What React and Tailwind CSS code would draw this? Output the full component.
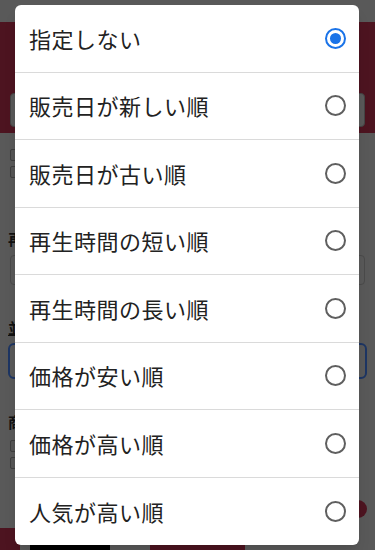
import { useState } from "react";

const options = [
  "指定しない",
  "販売日が新しい順",
  "販売日が古い順",
  "再生時間の短い順",
  "再生時間の長い順",
  "価格が安い順",
  "価格が高い順",
  "人気が高い順",
];

// page behind the modal, colours already dimmed by the backdrop
function Checkbox() {
  return <div className="w-[12px] h-[12px] border border-[#3e3e3e] bg-[#555] rounded-[2px]" />;
}

export default function App() {
  const [selected, setSelected] = useState(0);

  return (
    <div
      className="relative w-[375px] h-[550px] overflow-hidden bg-[#595959]"
      style={{ fontFamily: '"Noto Sans CJK JP", "Noto Sans", sans-serif' }}
    >
      <div className="flex flex-col h-full">
        <div className="h-[22px] flex items-center gap-6 px-5 text-[13px] text-[#1a1a1a]">
          <span>★</span>
          <span>だれでもあきたぼ…</span>
          <span className="ml-auto">|</span>
          <span>☆</span>
          <span>•</span>
        </div>
        <div className="h-[111px] bg-[#4d1420] flex items-end px-[10px] pb-[6px]">
          <div className="w-full h-[34px] bg-[#595959] rounded-[4px] border border-[#444]" />
        </div>
        <div className="flex flex-col px-[10px] pt-[16px] gap-[5px]">
          <Checkbox />
          <Checkbox />
        </div>
        <div className="px-[8px] pt-[50px] text-[15px] font-bold text-[#111]">再生時間</div>
        <div className="mx-[10px] mt-[4px] h-[30px] border border-[#4a4a4a] rounded-[4px]" />
        <div className="px-[8px] pt-[32px] text-[15px] font-bold text-[#111] underline">並び順</div>
        <div className="mx-[8px] mt-[4px] h-[36px] border-2 border-[#1d3563] rounded-[6px]" />
        <div className="px-[8px] pt-[32px] text-[15px] font-bold text-[#111]">商品</div>
        <div className="flex flex-col px-[10px] pt-[6px] gap-[5px]">
          <Checkbox />
          <Checkbox />
        </div>
        <div className="mt-auto h-[22px] flex gap-[10px]">
          <div className="w-[20px] bg-[#4d1420]" />
          <div className="w-[80px] bg-black" />
          <div className="w-[20px]" />
          <div className="w-[95px] bg-[#4d1420] text-[#777] text-[12px] text-center">価格別検索</div>
        </div>
      </div>
      <div className="absolute right-[8px] top-[500px] w-[18px] h-[18px] rounded-full bg-[#4d1420]" />

      {/* Dialog */}
      <div className="absolute left-[15px] top-[5px] w-[344px] bg-white rounded-[6px] shadow-lg overflow-hidden">
        {options.map((label, i) => (
          <button
            key={label}
            onClick={() => setSelected(i)}
            className={`w-full h-[67.5px] flex items-center pl-[14px] pr-[13px] text-left ${
              i < options.length - 1 ? "border-b border-[#dadada]" : ""
            }`}
          >
            <span className="flex-1 text-[22px] text-[#222] tracking-[0.5px]">{label}</span>
            {selected === i ? (
              <span className="w-[21px] h-[21px] rounded-full border-2 border-[#1a73e8] flex items-center justify-center">
                <span className="w-[11px] h-[11px] rounded-full bg-[#1a73e8]" />
              </span>
            ) : (
              <span className="w-[21px] h-[21px] rounded-full border-2 border-[#5f5f5f]" />
            )}
          </button>
        ))}
      </div>
    </div>
  );
}
